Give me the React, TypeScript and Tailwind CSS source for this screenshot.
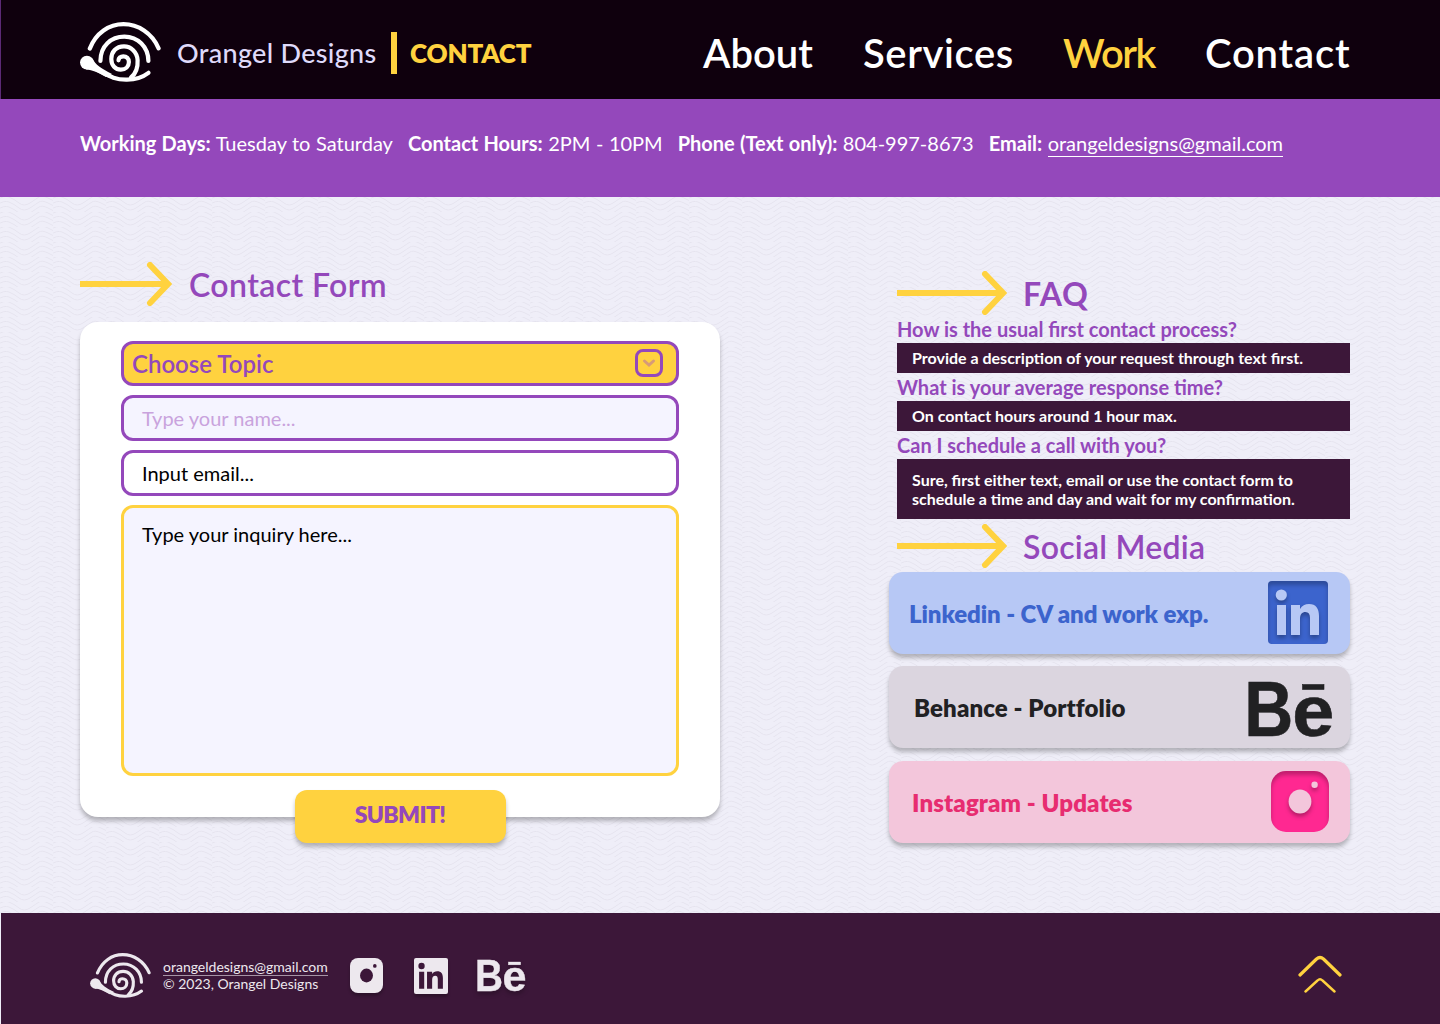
import React from "react";

const round = "[font-family:Lato,'Open_Sans',sans-serif]";

function Snail({ className }: { className: string }) {
  return (
    <svg className={className} viewBox="80 22 81 60" fill="none" stroke="currentColor" strokeWidth="4.2" strokeLinecap="round">
      <path d="M89.8 48.6C96 33 109 24.2 123.5 24.2S152 33 158.600 48.300" />
      <path d="M100.4 61C100.4 46 111 36.6 124.4 36.6S148.4 47 148.4 61" />
      <path d="M131 77.500C136.500 73 138 67 137.600 60C137 52 131 46.400 124 46.400C116 46.400 111.300 52 111.300 59C111.300 65.500 115.500 69.700 120.800 69.700C125.500 69.700 128.900 66.500 128.900 62C128.900 58.500 126.500 56.300 123.300 56.300C120.500 56.300 118.500 58 118.500 60.300" />
      <path d="M95 68.500C106 73.500 112 80 127 79.700C137 79.500 143 77 148.500 72.800" />
      <circle cx="86.900" cy="62.600" r="6.900" fill="currentColor" stroke="none" />
      <path d="M92.300 58.300C95.500 65 101 68.500 112 74L106 77C98 72.500 93 69.800 86 69.400Z" fill="currentColor" stroke="none" />
    </svg>
  );
}

function Arrow({ w }: { w: number }) {
  return (
    <svg width={w} height="44" viewBox={`0 0 ${w} 44`} fill="none" stroke="#ffd23f" strokeWidth="6" className="shrink-0">
      <path d={`M0 22H${w - 4}`} />
      <path d={`M${w - 22} 3L${w - 4} 22L${w - 22} 41`} strokeLinecap="round" />
    </svg>
  );
}

function Heading({ w, gap, children }: { w: number; gap: string; children: React.ReactNode }) {
  return (
    <div className={`flex h-11 items-center ${gap}`}>
      <Arrow w={w} />
      {children}
    </div>
  );
}

function LinkedIn({ fg, className }: { fg: string; className: string }) {
  return (
    <svg className={className} viewBox="0 0 60 63" preserveAspectRatio="none" fill={fg}>
      <circle cx="13.300" cy="14" r="5.600" />
      <path d="M9 24H18V54H9ZM23 24H32V28C34 24.500 37 23 41 23C48 23 51 27.500 51 35V54H42V37C42 33 40.500 31 37.500 31C34 31 32 33.500 32 38V54H23Z" />
    </svg>
  );
}

function Instagram({ fg, className }: { fg: string; className: string }) {
  return (
    <svg className={className} viewBox="0 0 58 61" preserveAspectRatio="none" fill={fg}>
      <ellipse cx="29" cy="30.500" rx="11.400" ry="12" />
      <circle cx="43.600" cy="13.800" r="3.200" />
    </svg>
  );
}

function Behance({ className }: { className: string }) {
  return (
    <svg className={`overflow-visible ${className}`} viewBox="0 0 85 56" fill="currentColor" stroke="currentColor" strokeWidth="0.6" fontFamily="Liberation Sans, Arial, sans-serif" fontWeight="700">
      <text x="-3.800" y="54.700" fontSize="78" textLength="49" lengthAdjust="spacingAndGlyphs">B</text>
      <text x="44.200" y="55" fontSize="73" textLength="42" lengthAdjust="spacingAndGlyphs">e</text>
      <rect x="54.500" y="3.500" width="21.500" height="5" />
    </svg>
  );
}

function Waves() {
  return (
    <svg className="absolute inset-0 h-full w-full" aria-hidden="true">
      <defs>
        <pattern id="waves" width="53" height="15" patternUnits="userSpaceOnUse">
          <g fill="none" stroke="#e6e4ef" strokeWidth="1">
            <path d="M-3 3Q4 -2 9 0T19 6T30 6T39 0T48 1T56 5" />
            <path d="M-3 8Q4 3 9 5T19 11T30 11T39 5T48 6T56 10" />
            <path d="M-3 13Q4 8 9 10T19 16T30 16T39 10T48 11T56 15" />
          </g>
        </pattern>
      </defs>
      <rect width="100%" height="100%" fill="url(#waves)" />
    </svg>
  );
}

const faq = [
  { q: "How is the usual first contact process?", a: "Provide a description of your request through text first.", h: "h-[30px]" },
  { q: "What is your average response time?", a: "On contact hours around 1 hour max.", h: "h-[30px]" },
  { q: "Can I schedule a call with you?", a: "Sure, first either text, email or use the contact form to schedule a time and day and wait for my confirmation.", h: "h-[60px]" },
];

export default function App() {
  return (
    <div className="flex h-[1024px] w-[1440px] flex-col overflow-hidden bg-[#efeef8] [font-family:Lato,sans-serif]">
      <header className={`flex h-[99px] shrink-0 items-center border-l border-[#5b2a75] bg-[#0f000d] pl-[79px] pr-[91px] pt-[7px] ${round}`}>
        <Snail className="mb-0.5 h-[60px] w-[81px] text-white" />
        <span className="ml-4 w-[200px] whitespace-nowrap pt-px text-[27px] font-medium tracking-[0.3px] text-[#dfdafa]">Orangel Designs</span>
        <span className="ml-[14px] h-[42px] w-[6px] bg-[#ffd23f]" />
        <span className="ml-[13px] whitespace-nowrap pt-px text-[26px] font-extrabold tracking-[-0.200px] text-[#ffd23f]">CONTACT</span>
        <nav className="ml-auto flex gap-[50px] whitespace-nowrap text-[40px] font-semibold leading-none text-white">
          <a className="w-[110px]">About</a>
          <a className="w-[150px] tracking-[0.600px]">Services</a>
          <a className="w-[92px] tracking-[-1.500px] text-[#ffd23f]">Work</a>
          <a className="w-[144px] tracking-[0.800px]">Contact</a>
        </nav>
      </header>
      <section className="flex h-[98px] shrink-0 gap-[15px] whitespace-nowrap bg-[#9448bb] pl-20 pt-8 text-[20px] leading-6 text-white [word-spacing:0.400px]">
        <p><b>Working Days:</b> Tuesday to Saturday</p>
        <p><b>Contact Hours:</b> 2PM - 10PM</p>
        <p><b>Phone (Text only):</b> 804-997-8673</p>
        <p><b>Email:</b> <a className="inline-block h-[26px] border-b border-white">orangeldesigns@gmail.com</a></p>
      </section>

      <main className="relative flex h-[716px] shrink-0 justify-between pl-20 pr-[90px]">
        <Waves />
        <section className="relative w-[640px] pt-[65px]">
          <Heading w={92} gap="gap-[17px]">
            <h2 className={`pt-0.5 text-[32px] font-semibold tracking-[0.400px] text-[#9448bb] ${round}`}>Contact Form</h2>
          </Heading>
          <form className="mt-4 flex h-[495px] flex-col items-center gap-[9px] rounded-[18px] bg-white pt-[19px] text-[20px] shadow-[0_4px_4px_rgba(0,0,0,0.25)]">
            <div className="flex h-[45px] w-[558px] shrink-0 items-center justify-between rounded-xl border-3 border-[#9448bb] bg-[#ffd23f] pl-2 pr-[13px]">
              <span className={`text-[24px] font-semibold text-[#9448bb] ${round}`}>Choose Topic</span>
              <span className="mb-0.5 flex size-7 items-center justify-center rounded-lg border-3 border-[#9448bb]">
                <svg width="14" height="10" viewBox="0 0 14 10" fill="none" stroke="#d79b78" strokeWidth="3" strokeLinecap="round"><path d="M2.500 3L7 7L11.500 3" /></svg>
              </span>
            </div>
            <div className="flex h-[46px] w-[558px] shrink-0 items-center rounded-xl border-3 border-[#9448bb] bg-[#f5f4ff] pb-px pl-[18px] text-[#c9a3dd]">Type your name...</div>
            <div className="flex h-[46px] w-[558px] shrink-0 items-center rounded-xl border-3 border-[#9448bb] bg-white pb-px pl-[18px] text-black">Input email...</div>
            <div className="h-[271px] w-[558px] shrink-0 rounded-xl border-3 border-[#ffd23f] bg-[#f5f4ff] pl-[18px] pt-[11px] text-black">Type your inquiry here...</div>
            <button type="button" className={`mt-[5px] h-[53px] w-[211px] shrink-0 rounded-xl bg-[#ffd23f] pb-1 text-[23px] font-extrabold tracking-[-0.700px] text-[#9448bb] shadow-[0_4px_4px_rgba(0,0,0,0.25)] ${round}`}>SUBMIT!</button>
          </form>
        </section>

        <section className="relative w-[461px] pt-[74px]">
          <div className="pl-2">
            <Heading w={110} gap="gap-4">
              <h2 className={`pt-0.5 text-[32px] font-bold tracking-[0.600px] text-[#9448bb] ${round}`}>FAQ</h2>
            </Heading>
            {faq.map((f) => (
              <div key={f.q}>
                <h3 className="h-7 whitespace-nowrap text-[20px] font-bold leading-7 text-[#9448bb]">{f.q}</h3>
                <div className={`flex items-center bg-[#3c1739] pb-px pl-[15px] pr-[30px] text-[16px] font-bold leading-[19px] text-white ${f.h}`}>
                  <p>{f.a}</p>
                </div>
              </div>
            ))}
            <div className="mt-[5px]">
              <Heading w={110} gap="gap-4">
                <h2 className={`pt-0.5 text-[32px] font-semibold tracking-[0.250px] text-[#9448bb] ${round}`}>Social Media</h2>
              </Heading>
            </div>
          </div>
          <div className={`mt-1 flex flex-col gap-3 text-[24px] font-extrabold ${round}`}>
            <a className="flex h-[82px] items-center justify-between rounded-[14px] bg-[#b7c8f5] pl-5 pr-[22px] text-[#3c64cd] shadow-[0_4px_4px_rgba(0,0,0,0.25)]">
              <span className="pt-0.5 tracking-[-0.080px]">Linkedin - CV and work exp.</span>
              <span className="mb-0.5 h-[63px] w-[60px] rounded bg-[#3c64cd] shadow-[inset_0_4px_4px_rgba(0,0,0,0.25)]">
                <LinkedIn fg="#b7c8f5" className="size-full drop-shadow-[0_3px_2px_rgba(0,0,0,0.3)]" />
              </span>
            </a>
            <a className="flex h-[82px] items-center justify-between rounded-[14px] bg-[#dbd5df] pl-[25px] pr-[17px] text-[#212123] shadow-[0_4px_4px_rgba(0,0,0,0.25)]">
              <span className="pt-0.5 tracking-[0.120px]">Behance - Portfolio</span>
              <Behance className="mt-1 h-14 w-[85px]" />
            </a>
            <a className="mt-px flex h-[82px] items-center justify-between rounded-[14px] bg-[#f3c6db] pl-[23px] pr-[21px] text-[#e72c70] shadow-[0_4px_4px_rgba(0,0,0,0.25)]">
              <span className="pt-0.5 tracking-[0.120px]">Instagram - Updates</span>
              <span className="mb-0.5 h-[61px] w-[58px] rounded-[15px] bg-[#ff2891] shadow-[inset_0_4px_4px_rgba(0,0,0,0.25)]">
                <Instagram fg="#f3c6db" className="size-full drop-shadow-[0_3px_2px_rgba(0,0,0,0.3)]" />
              </span>
            </a>
          </div>
        </section>
      </main>

      <footer className="flex h-[111px] shrink-0 items-center border-l border-[#efeef8] bg-[#3c1739] pl-[89px] pr-[98px] pt-[14px] text-[#ede8ee]">
        <Snail className="h-[45px] w-[61px]" />
        <div className="mb-px ml-3 w-[165px] whitespace-nowrap text-[14px] leading-[17px]">
          <a className="block h-[18px] border-b border-[#ede8ee]/60">orangeldesigns@gmail.com</a>
          <p className="-mt-px">© 2023, Orangel Designs</p>
        </div>
        <span className="ml-[22px] h-[35px] w-[33px] rounded-lg bg-[#ede8ee] shadow-[0_3px_3px_rgba(0,0,0,0.25)]">
          <Instagram fg="#3c1739" className="size-full" />
        </span>
        <span className="ml-[31px] h-9 w-[34px] rounded-xs bg-[#ede8ee] shadow-[0_3px_3px_rgba(0,0,0,0.25)]">
          <LinkedIn fg="#3c1739" className="size-full" />
        </span>
        <Behance className="ml-[29px] h-8 w-[49px] drop-shadow-[0_3px_2px_rgba(0,0,0,0.25)]" />
        <svg className="mb-1 ml-auto" width="44" height="38" viewBox="0 0 44 38" fill="none" stroke="#ffd23f" strokeLinecap="round" strokeLinejoin="round">
          <path d="M2 20L18.500 4Q22 1 25.500 4L42 20" strokeWidth="3.200" />
          <path d="M7.500 36.500L19.500 25.500Q22 23 24.500 25.500L36.500 36.500" strokeWidth="2.400" />
        </svg>
      </footer>
    </div>
  );
}
